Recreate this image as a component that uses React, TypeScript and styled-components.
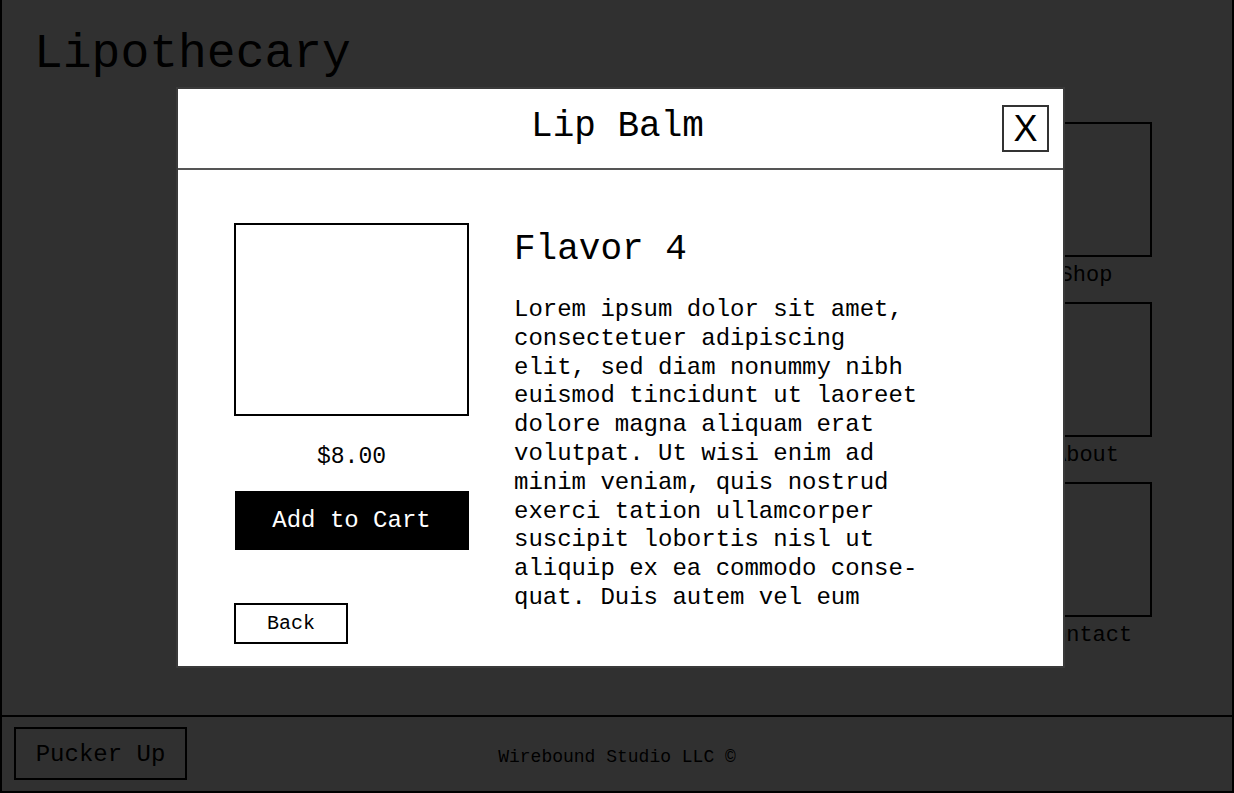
import React from "react";
import styled, { createGlobalStyle } from "styled-components";

const GlobalStyle = createGlobalStyle`
  html, body {
    margin: 0;
    padding: 0;
    background: #ffffff;
    font-family: "Liberation Mono", "Courier New", monospace;
    color: #000;
  }
  * { box-sizing: border-box; }
`;

const Page = styled.div`
  height: 793px;
  display: flex;
  flex-direction: column;
  background: #ffffff;
  border-left: 2px solid #000;
  border-right: 2px solid #000;
`;

const Header = styled.header`
  padding: 26px 0 0 32px;
`;

const SiteTitle = styled.h1`
  margin: 0;
  font-size: 48px;
  line-height: 56px;
  font-weight: 400;
`;

const Main = styled.main`
  flex: 1;
  display: flex;
  justify-content: flex-end;
  padding: 40px 80px 0 0;
`;

const Nav = styled.nav`
  display: flex;
  flex-direction: column;
  gap: 13px;
`;

const NavItem = styled.a`
  display: flex;
  flex-direction: column;
  align-items: center;
  color: #000;
  text-decoration: none;
`;

const NavThumb = styled.div`
  width: 132px;
  height: 135px;
  border: 2px solid #000;
`;

const NavLabel = styled.span`
  margin-top: 6px;
  font-size: 22px;
  line-height: 26px;
`;

const Footer = styled.footer`
  height: 78px;
  margin: 0 -2px;
  border: 2px solid #000;
  display: grid;
  grid-template-columns: 1fr auto 1fr;
  align-items: center;
  padding: 0 12px;
`;

const BrandBox = styled.div`
  justify-self: start;
  width: 173px;
  height: 53px;
  margin-bottom: 2px;
  border: 2px solid #000;
  display: flex;
  align-items: center;
  justify-content: center;
  padding-top: 2px;
  font-size: 24px;
`;

const Copyright = styled.span`
  font-size: 18px;
  line-height: 22px;
  margin-top: 6px;
`;

const Overlay = styled.div`
  position: fixed;
  inset: 0;
  background: rgba(0, 0, 0, 0.81);
  display: flex;
  align-items: flex-start;
  padding: 87px 0 0 176px;
`;

const Modal = styled.div`
  width: 889px;
  height: 581px;
  background: #fff;
  border: 2px solid #3a3a3a;
  display: flex;
  flex-direction: column;
`;

const ModalHeader = styled.div`
  height: 81px;
  flex: none;
  border-bottom: 2px solid #555;
  display: grid;
  grid-template-columns: 1fr auto 1fr;
  align-items: center;
  padding: 0 14px;
`;

const ModalTitle = styled.h2`
  grid-column: 2;
  margin: 0 6px 4px 0;
  font-size: 36px;
  line-height: 1;
  font-weight: 400;
`;

const CloseButton = styled.button`
  grid-column: 3;
  justify-self: end;
  width: 47px;
  height: 47px;
  padding: 0;
  border: 2px solid #333;
  background: #fff;
  font-family: "Liberation Sans", Arial, sans-serif;
  font-size: 36px;
  line-height: 1;
  color: #000;
  display: flex;
  align-items: center;
  justify-content: center;
`;

const ModalBody = styled.div`
  display: flex;
  gap: 45px;
  padding: 53px 0 0 56px;
`;

const LeftCol = styled.div`
  width: 235px;
  display: flex;
  flex-direction: column;
  align-items: center;
`;

const ProductImage = styled.div`
  width: 235px;
  height: 193px;
  border: 2px solid #000;
`;

const Price = styled.div`
  margin-top: 28px;
  font-size: 23px;
  line-height: 26px;
`;

const AddButton = styled.button`
  margin-top: 21px;
  width: 234px;
  height: 59px;
  border: none;
  background: #000;
  color: #fff;
  font-family: "Liberation Mono", "Courier New", monospace;
  font-size: 24px;
`;

const BackButton = styled.button`
  align-self: flex-start;
  margin-top: 53px;
  width: 114px;
  height: 41px;
  border: 2px solid #000;
  background: #fff;
  color: #000;
  font-family: "Liberation Mono", "Courier New", monospace;
  font-size: 20px;
`;

const RightCol = styled.div`
  width: 410px;
  padding-top: 5px;
`;

const Flavor = styled.h3`
  margin: 0;
  font-size: 36px;
  line-height: 43px;
  font-weight: 400;
`;

const Description = styled.p`
  margin: 25px 0 0;
  font-size: 24px;
  line-height: 28.8px;
  height: 317px;
  overflow: hidden;
`;

const navItems = ["Shop", "About", "Contact"];

const lorem =
  "Lorem ipsum dolor sit amet, consectetuer adipiscing elit, sed diam nonummy nibh euismod tincidunt ut laoreet dolore magna aliquam erat volutpat. Ut wisi enim ad minim veniam, quis nostrud exerci tation ullamcorper suscipit lobortis nisl ut aliquip ex ea commodo conse\u00ADquat. Duis autem vel eum iriure dolor in hendrerit in vulputate velit esse molestie consequat, vel illum dolore eu feugiat nulla facilisis.";

export default function App() {
  return (
    <>
      <GlobalStyle />
      <Page>
        <Header>
          <SiteTitle>Lipothecary</SiteTitle>
        </Header>
        <Main>
          <Nav>
            {navItems.map((item) => (
              <NavItem key={item}>
                <NavThumb />
                <NavLabel>{item}</NavLabel>
              </NavItem>
            ))}
          </Nav>
        </Main>
        <Footer>
          <BrandBox>Pucker Up</BrandBox>
          <Copyright>Wirebound Studio LLC ©</Copyright>
        </Footer>
      </Page>
      <Overlay>
        <Modal>
          <ModalHeader>
            <ModalTitle>Lip Balm</ModalTitle>
            <CloseButton>X</CloseButton>
          </ModalHeader>
          <ModalBody>
            <LeftCol>
              <ProductImage />
              <Price>$8.00</Price>
              <AddButton>Add to Cart</AddButton>
              <BackButton>Back</BackButton>
            </LeftCol>
            <RightCol>
              <Flavor>Flavor 4</Flavor>
              <Description>{lorem}</Description>
            </RightCol>
          </ModalBody>
        </Modal>
      </Overlay>
    </>
  );
}
